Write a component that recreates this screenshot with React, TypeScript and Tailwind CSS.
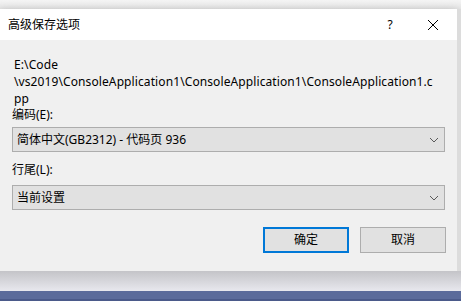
import React from 'react'

const font = { fontFamily: '"Noto Sans", "Noto Sans CJK SC", sans-serif' }

const Chevron = () => (
    <svg width="10" height="6" viewBox="0 0 10 6" className="shrink-0">
        <path d="M1 1 L5 5 L9 1" fill="none" stroke="#5a5a5a" strokeWidth="1" />
    </svg>
)

const Select = ({ value }: { value: string }) => (
    <div className="flex items-center justify-between h-[25px] mx-[12px] pl-[4px] pr-[5px] border border-[#adadad] bg-[#e1e1e1] text-[12px] text-black">
        <span>{value}</span>
        <Chevron />
    </div>
)

const App = () => {
    return (
        <div className="w-[461px] h-[301px] flex flex-col overflow-hidden bg-[#f0f0f0]" style={font}>
            <div className="h-[9px] bg-gradient-to-b from-[#f4f4f4] to-[#e6e6e6]" />
            <div className="flex h-[262px]">
                <div className="w-[457px] flex flex-col bg-[#f0f0f0] shadow-[0_2px_8px_rgba(0,0,0,0.25)]">
                    {/* title bar */}
                    <div className="h-[31px] bg-white flex items-center pl-[8px] text-[12px] text-black">
                        <span className="flex-1">高级保存选项</span>
                        <span className="w-[12px] text-center mr-[31px]">?</span>
                        <svg width="12" height="12" viewBox="0 0 12 12" className="mr-[18px]">
                            <path d="M1 1 L11 11 M11 1 L1 11" stroke="#000" strokeWidth="1" />
                        </svg>
                    </div>

                    {/* body */}
                    <div className="flex-1 flex flex-col pt-[16px] text-[12px] text-black">
                        <div className="px-[14px] leading-[17px] whitespace-nowrap tracking-[0.1px]">
                            <div>E:\Code</div>
                            <div>\vs2019\ConsoleApplication1\ConsoleApplication1\ConsoleApplication1.c</div>
                            <div>pp</div>
                        </div>
                        <div className="px-[12px] leading-[16px] mb-[4px]">编码(E):</div>
                        <Select value="简体中文(GB2312) - 代码页 936" />
                        <div className="px-[12px] leading-[16px] mt-[10px] mb-[7px]">行尾(L):</div>
                        <Select value="当前设置" />
                        <div className="flex justify-end gap-[11px] pr-[11px] mt-[17px]">
                            <button className="w-[86px] h-[26px] border-2 border-[#0078d7] bg-[#e1e1e1] text-[12px]">
                                确定
                            </button>
                            <button className="w-[86px] h-[26px] border border-[#adadad] bg-[#e1e1e1] text-[12px]">
                                取消
                            </button>
                        </div>
                    </div>
                </div>
                <div className="flex-1 bg-[#dcdcdc]" />
            </div>
            <div className="h-[20px] bg-gradient-to-b from-[#c4c4c8] to-[#e8e8ee]" />
            <div className="h-[10px] bg-[#5b6b9b] border-b-2 border-[#4b5a8a]" />
        </div>
    )
}

export default App
